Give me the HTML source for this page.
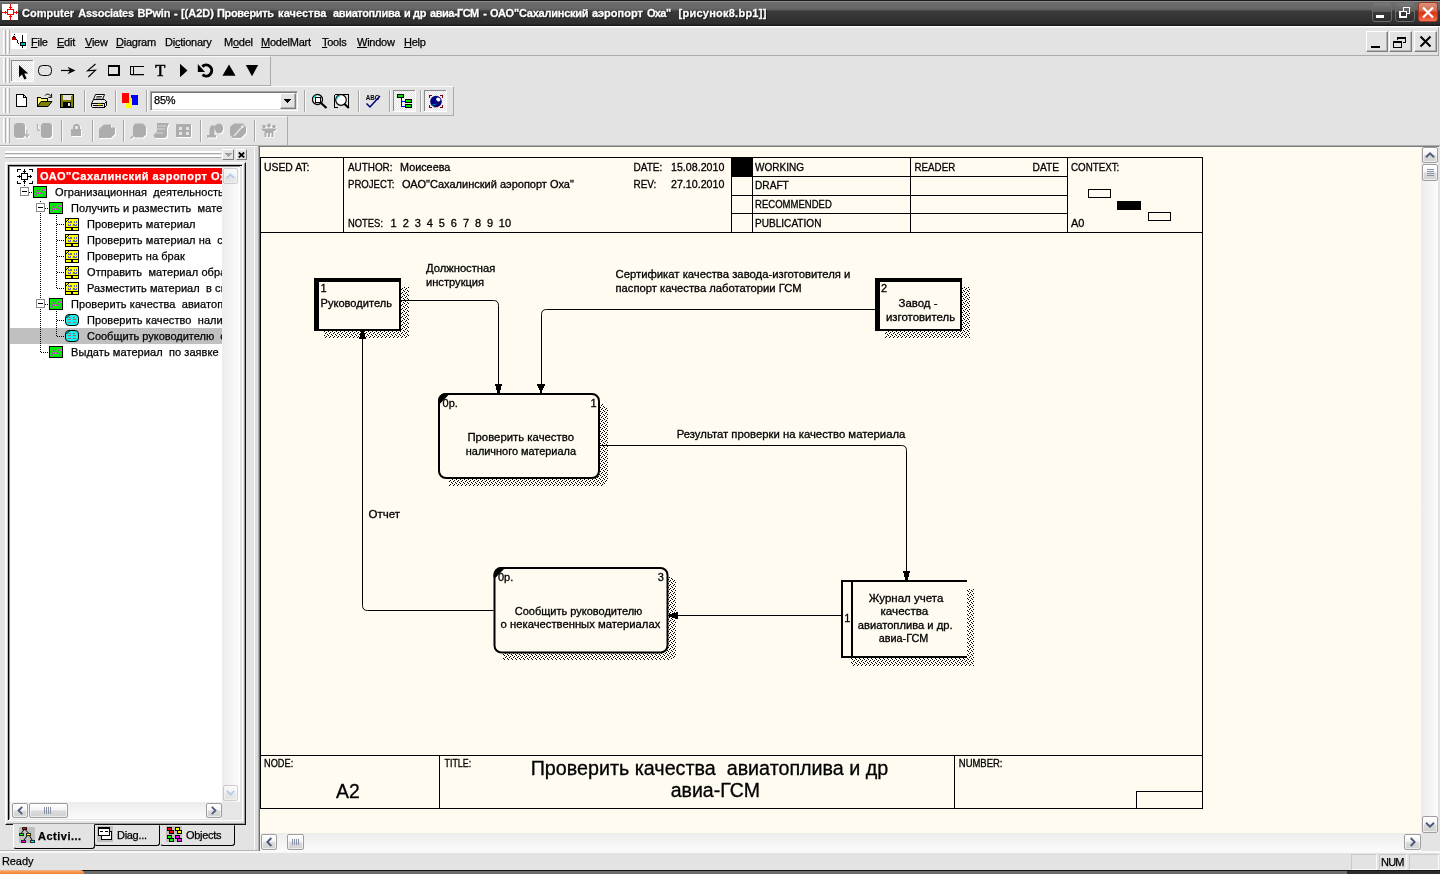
<!DOCTYPE html>
<html lang="ru">
<head>
<meta charset="utf-8">
<title>Computer Associates BPwin</title>
<style>
*{box-sizing:border-box;margin:0;padding:0}
html,body{width:1440px;height:874px;overflow:hidden;background:#e3e3e3}
body{will-change:transform;-webkit-text-stroke:.25px;position:relative;font-family:"Liberation Sans",sans-serif;font-size:11px;color:#000;line-height:1}
.abs{position:absolute}
/* ---------- title bar ---------- */
#titlebar{position:absolute;left:0;top:0;width:1440px;height:26px;
 background:linear-gradient(#1a1a1a 0,#1a1a1a 1px,#8c8c8c 1px,#8c8c8c 2px,#6d6d6d 2px,#656565 9px,#5a5a5a 10px,#3b3b3b 11px,#2d2d2d 24px,#191919 25px,#191919 26px)}
#titletext{position:absolute;left:22px;top:8px;font-weight:bold;font-size:11px;color:#fff;white-space:pre;letter-spacing:-0.04px;text-shadow:0 0 1px #000,1px 1px 0 #1a1a1a;-webkit-text-stroke:0.3px #fff}
.tbtn{position:absolute;top:2px;width:20px;height:20px;border-radius:3px;border:1px solid #6b6b6b;
 background:linear-gradient(#7a7a7a 0,#5c5c5c 48%,#3a3a3a 52%,#2e2e2e 100%)}
.tbtn.close{border-color:#a8371f;background:linear-gradient(#d8907e 0,#d9694f 45%,#dc3412 50%,#e8502e 80%,#f47a5c 100%)}
/* ---------- menu bar ---------- */
#menubar{position:absolute;left:0;top:26px;width:1440px;height:31px;background:#e3e3e3;border-top:1px solid #fdfdfd;box-shadow:inset 0 1px 0 #f0f0f0}
#menubar .band{position:absolute;left:0;top:0;width:1439px;height:29px;border-bottom:1px solid #ababab;border-right:1px solid #ababab}
.mi{position:absolute;top:10px;font-size:11px;white-space:pre;letter-spacing:-0.25px}
.mi u{text-decoration:underline;text-underline-offset:1px}
.grip{position:absolute;width:3px;border-left:1px solid #fff;border-right:1px solid #b0b0b0;background:#ececec}
.mdibtn{position:absolute;top:31px;width:22px;height:21px;background:#e3e3e3;border:1px solid;border-color:#fff #7e7e7e #7e7e7e #fff;box-shadow:inset -1px -1px 0 #b4b4b4}
/* ---------- toolbars ---------- */
.toolbar{position:absolute;left:0;height:30px;background:#e3e3e3;border-top:1px solid #fafafa;border-bottom:1px solid #aaa;border-right:1px solid #aaa}
.sep{position:absolute;width:2px;border-left:1px solid #a6a6a6;border-right:1px solid #fafafa}
.dither{background-color:#f1f1f1}

/* ---------- left panel ---------- */
#leftpanel{position:absolute;left:0;top:146px;width:258px;height:705px;background:#e3e3e3;border-top:1px solid #fbfbfb}
.hgrip{position:absolute;left:5px;width:216px;height:3px;background:#fff;border-bottom:1px solid #a8a8a8}
.sbtn{position:absolute;background:#e3e3e3;border:1px solid;border-color:#fff #7e7e7e #7e7e7e #fff}
#tabctl{position:absolute;left:5px;top:162px;width:241px;height:663px;border:1px solid;border-color:#fff #111 #111 #fff;box-shadow:inset -1px -1px 0 #9a9a9a,inset 1px 1px 0 #f4f4f4;background:#e3e3e3}
#treewin{position:absolute;left:7px;top:164px;width:236px;height:657px;border:1px solid;border-color:#c4c4c4 #fff #fff #c4c4c4;background:#e3e3e3;box-shadow:inset 1px 1px 0 #000}
#treein{position:absolute;left:1px;top:1px;width:231px;height:653px;border-left:1px solid #8e8e8e;border-top:1px solid #8e8e8e;background:#fff;overflow:hidden}
.trow{position:absolute;left:0;width:212px;height:16px;white-space:pre;overflow:hidden;font-size:11px}
.trow span{position:absolute;top:3px;letter-spacing:.07px}
.xsb{position:absolute;background:linear-gradient(90deg,#ececec,#fbfbfb)}
.xbtn{position:absolute;border:1px solid #9d9d9d;border-radius:2px;background:linear-gradient(#fff 0,#f4f4f4 45%,#dadada 55%,#d2d2d2 100%);box-shadow:inset 0 0 0 1px rgba(255,255,255,.6)}
.tab{position:absolute;background:#e3e3e3;border:1px solid;border-color:transparent #000 #000 #fff;border-radius:0 0 3px 3px}

/* ---------- MDI ---------- */
#mdi{background:#fffbf0}
#diagram text{font-family:"Liberation Sans",sans-serif;fill:#000;stroke:#000;stroke-width:.3px}
/* ---------- status ---------- */
#status{position:absolute;left:0;top:851px;width:1440px;height:19px;background:#e3e3e3}
#status .hl{position:absolute;left:0;top:0;width:1440px;height:2px;background:#f8f8f8}
.spanel{position:absolute;top:3px;height:16px;border:1px solid;border-color:#c9c9c9 #fbfbfb #fbfbfb #c9c9c9}
#taskstrip{position:absolute;left:0;top:870px;width:1440px;height:4px;background:linear-gradient(#0c0c0c 0,#1c1c1c 1px,#6a6a6a 1px,#6e6e6e 4px)}
#titletext span{position:absolute;top:0}
</style>
</head>
<body>

<!-- ================= TITLE BAR ================= -->
<div id="titlebar">
  <svg class="abs" style="left:2px;top:4px" width="16" height="16" viewBox="0 0 16 16" shape-rendering="crispEdges">
    <rect width="16" height="16" fill="#fff"/>
    <rect x="5.500" y="5.500" width="6" height="5" fill="none" stroke="#f00"/>
    <path d="M8.500 0V5M8.500 11V16M0 8.500H5M12 8.500H16" stroke="#f00" fill="none"/>
    <path d="M7 3.500h3M7 12.500h3M3.500 7v3M14.500 7v3" stroke="#f00" fill="none"/>
  </svg>
  <div id="titletext"><span id="tw0" style="left:0px;letter-spacing:0.02px">Computer</span> <span id="tw1" style="left:56.25px;letter-spacing:-0.25px">Associates</span> <span id="tw2" style="left:115.5px;letter-spacing:-0.18px">BPwin</span> <span id="tw3" style="left:151.9px;letter-spacing:-0.12px">-</span> <span id="tw4" style="left:159px;letter-spacing:-0.04px">[(A2D)</span> <span id="tw5" style="left:194.9px;letter-spacing:-0.31px">Проверить</span> <span id="tw6" style="left:256.1px;letter-spacing:0.06px">качества</span> <span id="tw7" style="left:311.1px;letter-spacing:-0.37px">авиатоплива</span> <span id="tw8" style="left:382px;letter-spacing:-0.60px">и</span> <span id="tw9" style="left:391.1px;letter-spacing:-0.36px">др</span> <span id="tw10" style="left:408px;letter-spacing:-0.46px">авиа-ГСМ</span> <span id="tw11" style="left:461.2px;letter-spacing:-0.22px">-</span> <span id="tw12" style="left:468px;letter-spacing:-0.23px">ОАО"Сахалинский</span> <span id="tw13" style="left:569.9px;letter-spacing:-0.00px">аэропорт</span> <span id="tw14" style="left:624.9px;letter-spacing:-0.60px">Оха"</span> <span id="tw15" style="left:656.5px;letter-spacing:0.25px">[рисунок8.bp1]]</span></div>
  <div class="tbtn" style="left:1372px"><div class="abs" style="left:3px;top:12px;width:8px;height:3px;background:#fff"></div></div>
  <div class="tbtn" style="left:1395px">
    <svg class="abs" style="left:0;top:0" width="18" height="18" viewBox="0 0 18 18" shape-rendering="crispEdges"><path d="M7.5 7.5v-3h6v6h-3" fill="none" stroke="#fff" stroke-width="1"/><rect x="3.750" y="8.250" width="6.500" height="5.500" fill="none" stroke="#fff" stroke-width="1.500"/></svg>
  </div>
  <div class="tbtn close" style="left:1418px">
    <svg class="abs" style="left:0;top:0" width="18" height="18" viewBox="0 0 18 18"><path d="M4 4.5l10 10M14 4.5l-10 10" stroke="#fff" stroke-width="2.2" fill="none"/></svg>
  </div>
</div>

<!-- ================= MENU BAR ================= -->
<div id="menubar">
  <div class="band"></div>
  <div class="grip" style="left:3px;top:3px;height:24px"></div>
  <div class="grip" style="left:7px;top:3px;height:24px"></div>
  <svg class="abs" style="left:11px;top:6px" width="16" height="16" viewBox="0 0 16 16" shape-rendering="crispEdges">
    <rect width="16" height="16" fill="#fff"/>
    <rect x="1" y="4" width="4" height="3" fill="#c00000"/><rect x="2" y="3" width="2" height="1" fill="#000"/><rect x="3" y="1" width="1" height="1" fill="#000"/>
    <path d="M5 6.5h1M6 7.5h1M6.5 8v2M7 10.5h1" stroke="#000" fill="none"/>
    <path d="M11.500 2v13" stroke="#000" fill="none"/>
    <rect x="9" y="9" width="5" height="3" fill="#00c0c0" stroke="#000" stroke-width="1"/>
  </svg>
  <span class="mi" id="m1" style="left:31px"><u>F</u>ile</span>
  <span class="mi" id="m2" style="left:57px"><u>E</u>dit</span>
  <span class="mi" id="m3" style="left:85px"><u>V</u>iew</span>
  <span class="mi" id="m4" style="left:116px"><u>D</u>iagram</span>
  <span class="mi" id="m5" style="left:165px">Di<u>c</u>tionary</span>
  <span class="mi" id="m6" style="left:224px">M<u>o</u>del</span>
  <span class="mi" id="m7" style="left:261px"><u>M</u>odelMart</span>
  <span class="mi" id="m8" style="left:322px"><u>T</u>ools</span>
  <span class="mi" id="m9" style="left:357px"><u>W</u>indow</span>
  <span class="mi" id="m10" style="left:404px"><u>H</u>elp</span>
</div>
<div class="mdibtn" style="left:1366px"><div class="abs" style="left:4px;top:14px;width:9px;height:2px;background:#000"></div></div>
<div class="mdibtn" style="left:1389px;width:23px">
  <svg class="abs" style="left:0;top:0" width="20" height="19" viewBox="0 0 20 19" shape-rendering="crispEdges"><path d="M7.500 8v-2.500h8v5h-3" fill="none" stroke="#000"/><path d="M7 6h9" stroke="#000" stroke-width="2"/><rect x="3.500" y="9.500" width="8" height="6" fill="none" stroke="#000"/><path d="M3 10h9" stroke="#000" stroke-width="2"/></svg>
</div>
<div class="mdibtn" style="left:1414px;width:23px">
  <svg class="abs" style="left:0;top:0" width="20" height="19" viewBox="0 0 20 19"><path d="M5.500 4.500l10 10M15.500 4.500l-10 10" stroke="#000" stroke-width="2" fill="none"/></svg>
</div>

<!-- ================= TOOLBARS ================= -->
<div class="toolbar" id="tb1" style="top:56px;width:271px">
  <div class="grip" style="left:3px;top:1px;height:25px"></div>
  <div class="grip" style="left:7px;top:1px;height:25px"></div>
  <svg class="abs" style="left:0;top:0" width="270" height="28" viewBox="0 57 270 28">
    <defs>
      <pattern id="dith" width="2" height="2" patternUnits="userSpaceOnUse"><rect width="2" height="2" fill="#fff"/><rect width="1" height="1" fill="#e3e3e3"/><rect x="1" y="1" width="1" height="1" fill="#e3e3e3"/></pattern>
    </defs>
    <g shape-rendering="crispEdges">
      <rect x="11" y="60" width="23" height="22" fill="url(#dith)"/>
      <path d="M11.500 82V60.500H34" stroke="#8a8a8a" fill="none"/>
      <path d="M11 81.500H33.500V60" stroke="#fff" fill="none"/>
    </g>
    <path d="M19 65V77.300L22 74.400L24.300 79.600L26.600 78.600L24.300 73.500H28.300Z" fill="#000"/>
    <rect x="38.500" y="65.500" width="13" height="10" rx="4" ry="4" fill="none" stroke="#000"/>
    <path d="M61 70.500H72" stroke="#000" stroke-width="1.200" fill="none"/>
    <path d="M75.500 70.500L67.500 66.800L70 70.500L67.500 74.200Z" fill="#000"/>
    <path d="M95.500 64L87.500 70.800L95.500 70.200L88.300 77" stroke="#000" stroke-width="1.100" fill="none"/>
    <g shape-rendering="crispEdges">
      <rect x="109" y="66" width="11" height="10" fill="#a8a8a8"/>
      <rect x="108" y="65" width="11" height="10" fill="#e3e3e3" stroke="none"/>
      <path d="M108 66H119.500" stroke="#000" stroke-width="2"/>
      <path d="M108.500 65V75.500M119 65V75.500M108 75H119.500" stroke="#000" stroke-width="1.400" fill="none"/>
      <path d="M144 66.500H130.500V74.500H144M133.500 66V75" stroke="#000" fill="none"/>
      <path d="M131 75.500H144" stroke="#a8a8a8" fill="none"/>
    </g>
    <text x="160.200" y="76" font-family="'Liberation Serif',serif" font-size="16.500" text-anchor="middle" fill="#000" stroke="#000" stroke-width=".6">T</text>
    <path d="M180 63.800L187.500 70.500L180 77.300Z" fill="#000"/>
    <path d="M202.300 66.600A5.500 5.500 0 1 1 202.600 74.700" stroke="#000" stroke-width="3" fill="none"/>
    <path d="M197.800 63.900V71.900H205Z" fill="#000"/>
    <path d="M229 64.400L235.600 75.800H222.400Z" fill="#000"/>
    <path d="M245.800 65H258.200L252 76.200Z" fill="#000"/>
  </svg>
</div>
<div class="toolbar" id="tb2" style="top:86px;width:454px">
  <div class="grip" style="left:3px;top:1px;height:25px"></div>
  <div class="grip" style="left:7px;top:1px;height:25px"></div>
  <div class="sep" style="left:84px;top:3px;height:22px"></div>
  <div class="sep" style="left:115px;top:3px;height:22px"></div>
  <div class="sep" style="left:146px;top:3px;height:22px"></div>
  <div class="sep" style="left:304px;top:3px;height:22px"></div>
  <div class="sep" style="left:358px;top:3px;height:22px"></div>
  <div class="sep" style="left:389px;top:3px;height:22px"></div>
  <div class="sep" style="left:420px;top:3px;height:22px"></div>
  <!-- zoom combo -->
  <div class="abs" style="left:150px;top:4px;width:148px;height:20px;background:#fff;border:1px solid;border-color:#a2a2a2 #fff #fff #a2a2a2;box-shadow:inset 1px 1px 0 #787878,inset -1px -1px 0 #dcdcdc">
    <span class="abs" style="left:3px;top:3px;font-size:11px;letter-spacing:-0.2px">85%</span>
    <div class="abs" style="right:1px;top:1px;width:16px;height:16px;background:#e3e3e3;border:1px solid;border-color:#fff #7e7e7e #7e7e7e #fff;box-shadow:inset -1px -1px 0 #b4b4b4">
      <svg class="abs" style="left:3px;top:5px" width="7" height="4" viewBox="0 0 7 4" shape-rendering="crispEdges"><path d="M0 0h7v1h-7zM1 1h5v1h-5zM2 2h3v1h-3zM3 3h1v1h-1z" fill="#000"/></svg>
    </div>
  </div>
  <svg class="abs" style="left:0;top:0" width="453" height="28" viewBox="0 87 453 28">
    <!-- new -->
    <g shape-rendering="crispEdges">
      <path d="M16.500 94.500H23.500L26.500 97.500V106.500H16.500Z" fill="#fff" stroke="#000"/>
      <path d="M23.500 94.500V97.500H26.500" fill="none" stroke="#000"/>
    </g>
    <!-- open -->
    <path d="M37.500 106.500V97.500H40.500L41.500 98.500H47.500V101" fill="#ffff80" stroke="#000" shape-rendering="crispEdges"/>
    <path d="M37.500 106.500L41 101.500H52L48 106.500Z" fill="#808000" stroke="#000" stroke-width="1"/>
    <path d="M45 95.500C46.500 93.600 49.500 93.600 51 96.500" fill="none" stroke="#000"/>
    <path d="M51.600 93.800V97.400H48.300" fill="none" stroke="#000"/>
    <!-- save -->
    <g shape-rendering="crispEdges">
      <rect x="60.500" y="94.500" width="13" height="13" fill="#808000" stroke="#000"/>
      <rect x="63" y="95" width="8" height="5" fill="#e3e3e3"/>
      <rect x="63" y="102" width="8" height="5" fill="#000"/>
      <rect x="68" y="103" width="2" height="3" fill="#e3e3e3"/>
      <rect x="71" y="95" width="1" height="1" fill="#e3e3e3"/>
    </g>
    <!-- printer -->
    <path d="M95.500 94.500H104.500L102.500 99.500H93.500Z" fill="#fff" stroke="#000"/>
    <path d="M96.500 96.500H102M95.800 98H101.500" stroke="#000" stroke-width=".8"/>
    <path d="M91.500 103.500L93.500 99.500H104.500L106.500 101.500V105.500L104.500 107.500H92.500L91.500 106.500Z" fill="#e8e8e8" stroke="#000"/>
    <path d="M91.500 103.500H104.500L106.500 101.500M104.500 103.500V107.500" fill="none" stroke="#000"/>
    <path d="M93 105.500H103" stroke="#000"/>
    <rect x="98" y="103.800" width="3" height="1.400" fill="#ff0"/>
    <!-- colors -->
    <g shape-rendering="crispEdges">
      <rect x="131" y="95" width="7" height="10" fill="#0000ff"/>
      <rect x="125" y="98" width="7" height="10" fill="#ffff00"/>
      <rect x="122" y="93" width="7" height="10" fill="#ff0000"/>
    </g>
    <!-- magnifier 1 -->
    <circle cx="317.500" cy="99.500" r="5" fill="#fff" stroke="#000" stroke-width="1.300"/>
    <path d="M313.800 98.200A4 4 0 0 1 316.500 95.700" stroke="#00e0e0" fill="none" stroke-width="1.200"/>
    <rect x="315.500" y="97.500" width="4.500" height="4.500" fill="none" stroke="#000" shape-rendering="crispEdges"/>
    <path d="M321.300 103.300L326.500 108" stroke="#000" stroke-width="2.200"/>
    <!-- magnifier 2 -->
    <path d="M334.500 94.500H348.500V107.500M334.500 94.500V107.500H338" stroke="#000" fill="none" shape-rendering="crispEdges"/>
    <circle cx="341" cy="100" r="5.300" fill="#fff" stroke="#000" stroke-width="1.200"/>
    <path d="M336.800 99A4.300 4.300 0 0 1 339.800 95.800" stroke="#00e0e0" fill="none" stroke-width="1.200"/>
    <path d="M344.500 104L348.800 108" stroke="#000" stroke-width="2.200"/>
    <!-- ABC check -->
    <text x="365.800" y="100" font-family="'Liberation Sans',sans-serif" font-size="8" font-weight="bold" fill="#000" textLength="13.500" lengthAdjust="spacingAndGlyphs">ABC</text>
    <path d="M366.500 103.500L370 107L380 96" stroke="#000080" stroke-width="1.500" fill="none"/>
    <!-- pressed buttons -->
    <g shape-rendering="crispEdges">
      <rect x="393" y="90" width="23" height="22" fill="url(#dith)"/>
      <path d="M393.500 112V90.500H416" stroke="#8a8a8a" fill="none"/>
      <path d="M393 111.500H415.500V90" stroke="#fff" fill="none"/>
      <rect x="424" y="90" width="23" height="22" fill="url(#dith)"/>
      <path d="M424.500 112V90.500H447" stroke="#8a8a8a" fill="none"/>
      <path d="M424 111.500H446.500V90" stroke="#fff" fill="none"/>
      <!-- tree icon -->
      <path d="M401.500 98V106.500H406M401.500 101.500H406" stroke="#0000ff" fill="none"/>
      <rect x="397.500" y="94.500" width="6" height="3" fill="#00e000" stroke="#000"/>
      <rect x="405.500" y="99.500" width="6" height="3" fill="#00e000" stroke="#000"/>
      <rect x="405.500" y="104.500" width="6" height="3" fill="#00e000" stroke="#000"/>
      <!-- globe frame -->
      <path d="M429.500 98V95.500H432M440 95.500H442.500V98M429.500 105V107.500H432M440 107.500H442.500V105" stroke="#800000" fill="none"/>
    </g>
    <circle cx="436" cy="101.500" r="5.800" fill="#000080"/>
    <ellipse cx="438.300" cy="99.500" rx="2.300" ry="1.800" fill="#fff" transform="rotate(35 438.300 99.500)"/>
    <path d="M431.500 105.500C433 104.500 435 105 436.500 103.800" stroke="#00a0a0" fill="none"/>
    <path d="M433 104L438 108M439 103L434 108" stroke="#800000" stroke-width=".7" stroke-dasharray="1 1" fill="none"/>
  </svg>
</div>
<div class="toolbar" id="tb3" style="top:116px;width:288px">
  <div class="grip" style="left:3px;top:1px;height:25px"></div>
  <div class="grip" style="left:7px;top:1px;height:25px"></div>
  <div class="sep" style="left:61px;top:3px;height:22px"></div>
  <div class="sep" style="left:92px;top:3px;height:22px"></div>
  <div class="sep" style="left:123px;top:3px;height:22px"></div>
  <div class="sep" style="left:200px;top:3px;height:22px"></div>
  <div class="sep" style="left:254px;top:3px;height:22px"></div>
  <svg class="abs" style="left:0;top:0" width="287" height="28" viewBox="0 117 287 28">
    <style>.hl path,.hl ellipse,.hl circle{fill:#fff;stroke:#fff}.hl .st{fill:none}.dk path,.dk ellipse,.dk circle{fill:#adadad;stroke:#adadad}.dk .st{fill:none}</style>
    <g class="hl" transform="translate(1 1)" stroke-width="0">
      <path d="M16 123H23L25 125V136L23 138H16L14 136V125Z"/>
      <path d="M27 130V136M25.200 134L27 137.300L29.200 134" fill="none" stroke-width="1.100" class="st"/>
      <path d="M43 123H50L52 125V136L50 138H43L41 136V125Z"/>
      <path d="M37.500 124V128.500Q37.500 130.800 40.500 131" fill="none" stroke-width="1.200" class="st"/>
      <path d="M71 129H81V136H71Z"/>
      <path d="M73 129V126L75 124H78L80 126V129Z"/>
      <path d="M99 129L104 124.500H111V127.500H115V134L111 138H99Z"/>
      <path d="M135 123.500H143L146 126.500V134.500L143 137.500H135L133 134.500V126.500Z"/>
      <path d="M134.500 135L130.500 138.500" fill="none" stroke-width="1.600" class="st"/>
      <path d="M157 123H169L167 128V136L165 138H155L153.500 135.500L157 131Z"/>
      <path d="M176 124H191V137H176Z"/>
      <path d="M207 137.500H216V135H214.500V129L216 125.500H211L209.500 129V135H207Z"/>
      <ellipse cx="219" cy="128.500" rx="4.200" ry="5"/>
      <path d="M234 123.500H243L246 127V133L241 138H233L230 135V127Z"/>
      <circle cx="264" cy="126.500" r="1.800"/><circle cx="269" cy="125.500" r="2"/><circle cx="274" cy="126.500" r="1.800"/>
      <path d="M261 128.500H277L275 131H273.500V137H271.500V133H270V137H268V133H266.500V137H264.500V131H263Z"/>
    </g>
    <g class="dk" stroke-width="0">
      <path d="M16 123H23L25 125V136L23 138H16L14 136V125Z"/>
      <path d="M27 130V136M25.200 134L27 137.300L29.200 134" fill="none" stroke-width="1.100" class="st"/>
      <path d="M43 123H50L52 125V136L50 138H43L41 136V125Z"/>
      <path d="M37.500 124V128.500Q37.500 130.800 40.500 131" fill="none" stroke-width="1.200" class="st"/>
      <path d="M71 129H81V136H71Z"/>
      <path d="M73 129V126L75 124H78L80 126V129Z"/>
      <path d="M99 129L104 124.500H111V127.500H115V134L111 138H99Z"/>
      <path d="M135 123.500H143L146 126.500V134.500L143 137.500H135L133 134.500V126.500Z"/>
      <path d="M134.500 135L130.500 138.500" fill="none" stroke-width="1.600" class="st"/>
      <path d="M157 123H169L167 128V136L165 138H155L153.500 135.500L157 131Z"/>
      <path d="M176 124H191V137H176Z"/>
      <path d="M207 137.500H216V135H214.500V129L216 125.500H211L209.500 129V135H207Z"/>
      <ellipse cx="219" cy="128.500" rx="4.200" ry="5"/>
      <path d="M234 123.500H243L246 127V133L241 138H233L230 135V127Z"/>
      <circle cx="264" cy="126.500" r="1.800"/><circle cx="269" cy="125.500" r="2"/><circle cx="274" cy="126.500" r="1.800"/>
      <path d="M261 128.500H277L275 131H273.500V137H271.500V133H270V137H268V133H266.500V137H264.500V131H263Z"/>
    </g>
    <g fill="#e3e3e3" shape-rendering="crispEdges">
      <rect x="179" y="127" width="3" height="3"/><rect x="186" y="127" width="3" height="3"/><rect x="179" y="132" width="3" height="3"/><rect x="186" y="132" width="3" height="3"/>
      <rect x="75" y="126" width="3" height="3"/>
    </g>
    <path d="M234 136L242 127" stroke="#e3e3e3" stroke-width="1.500"/><circle cx="242.500" cy="126.500" r="1.500" fill="#e3e3e3"/>
    <path d="M158 126H166M157 129H165M156 133H163" stroke="#e3e3e3" stroke-width=".8"/>
  </svg>
</div>

<!-- ================= LEFT PANEL ================= -->
<div id="leftpanel">
  <div class="hgrip" style="top:4px"></div>
  <div class="hgrip" style="top:8px"></div>
  <div class="sbtn" style="left:222px;top:2px;width:12px;height:11px"><svg class="abs" style="left:2px;top:3px" width="7" height="4" viewBox="0 0 7 4" shape-rendering="crispEdges"><path d="M0 0h7v1h-7zM1 1h5v1h-5zM2 2h3v1h-3zM3 3h1v1h-1z" fill="#a0a0a0"/></svg></div>
  <div class="sbtn" style="left:236px;top:2px;width:11px;height:11px"><svg class="abs" style="left:1px;top:2px" width="7" height="6" viewBox="0 0 7 6"><path d="M.8.5l5.400 5M6.200.5l-5.400 5" stroke="#000" stroke-width="1.800"/></svg></div>
</div>
<div id="tabctl"></div>
<div id="treewin"><div id="treein">
  <div class="abs" id="treecontent" style="left:0;top:0;width:212px;height:635px;overflow:hidden">
        <div class="trow" style="top:1px;left:27px;width:185px;background:#ff0000;color:#fff;font-weight:bold"><span id="troot" style="left:3px;letter-spacing:0.48px">ОАО"Сахалинский аэропорт Оха"</span></div>
    <div class="trow" style="top:17px;"><span id="t1" style="left:45px">Огранизационная  деятельность  ОАО</span></div>
    <div class="trow" style="top:33px;"><span id="t2" style="left:61px">Получить и разместить  материал</span></div>
    <div class="trow" style="top:49px;"><span id="t3" style="left:77px">Проверить материал</span></div>
    <div class="trow" style="top:65px;"><span id="t4" style="left:77px">Проверить материал на  соответствие</span></div>
    <div class="trow" style="top:81px;"><span id="t5" style="left:77px">Проверить на брак</span></div>
    <div class="trow" style="top:97px;"><span id="t6" style="left:77px">Отправить  материал обратно</span></div>
    <div class="trow" style="top:113px;"><span id="t7" style="left:77px">Разместить материал  в складе</span></div>
    <div class="trow" style="top:129px;"><span id="t8" style="left:61px">Проверить качества  авиатоплива и др</span></div>
    <div class="trow" style="top:145px;"><span id="t9" style="left:77px">Проверить качество  наличного материала</span></div>
    <div class="trow" style="top:161px; background:#c0c0c0;"><span id="t10" style="left:77px;letter-spacing:-0.02px">Сообщить руководителю  о некачественных</span></div>
    <div class="trow" style="top:177px;"><span id="t11" style="left:61px">Выдать материал  по заявке</span></div>
    <svg class="abs" style="left:0;top:0" width="213" height="200" viewBox="0 0 213 200" shape-rendering="crispEdges">
      <path d="M14 18h1v1h-1zM19 25h1v1h-1zM21 25h1v1h-1zM30 34h1v1h-1zM35 41h1v1h-1zM37 41h1v1h-1zM30 46h1v1h-1zM30 48h1v1h-1zM30 50h1v1h-1zM30 52h1v1h-1zM30 54h1v1h-1zM30 56h1v1h-1zM30 58h1v1h-1zM30 60h1v1h-1zM30 62h1v1h-1zM30 64h1v1h-1zM30 66h1v1h-1zM30 68h1v1h-1zM30 70h1v1h-1zM30 72h1v1h-1zM30 74h1v1h-1zM30 76h1v1h-1zM30 78h1v1h-1zM30 80h1v1h-1zM30 82h1v1h-1zM30 84h1v1h-1zM30 86h1v1h-1zM30 88h1v1h-1zM30 90h1v1h-1zM30 92h1v1h-1zM30 94h1v1h-1zM30 96h1v1h-1zM30 98h1v1h-1zM30 100h1v1h-1zM30 102h1v1h-1zM30 104h1v1h-1zM30 106h1v1h-1zM30 108h1v1h-1zM30 110h1v1h-1zM30 112h1v1h-1zM30 114h1v1h-1zM30 116h1v1h-1zM30 118h1v1h-1zM30 120h1v1h-1zM30 122h1v1h-1zM30 124h1v1h-1zM30 126h1v1h-1zM30 128h1v1h-1zM30 130h1v1h-1zM30 142h1v1h-1zM30 144h1v1h-1zM30 146h1v1h-1zM30 148h1v1h-1zM30 150h1v1h-1zM30 152h1v1h-1zM30 154h1v1h-1zM30 156h1v1h-1zM30 158h1v1h-1zM30 160h1v1h-1zM30 162h1v1h-1zM30 164h1v1h-1zM30 166h1v1h-1zM30 168h1v1h-1zM30 170h1v1h-1zM30 172h1v1h-1zM30 174h1v1h-1zM30 176h1v1h-1zM30 178h1v1h-1zM30 180h1v1h-1zM30 182h1v1h-1zM30 184h1v1h-1zM31 185h1v1h-1zM33 185h1v1h-1zM35 185h1v1h-1zM37 185h1v1h-1zM35 137h1v1h-1zM37 137h1v1h-1zM46 48h1v1h-1zM46 50h1v1h-1zM46 52h1v1h-1zM46 54h1v1h-1zM46 56h1v1h-1zM46 58h1v1h-1zM46 60h1v1h-1zM46 62h1v1h-1zM46 64h1v1h-1zM46 66h1v1h-1zM46 68h1v1h-1zM46 70h1v1h-1zM46 72h1v1h-1zM46 74h1v1h-1zM46 76h1v1h-1zM46 78h1v1h-1zM46 80h1v1h-1zM46 82h1v1h-1zM46 84h1v1h-1zM46 86h1v1h-1zM46 88h1v1h-1zM46 90h1v1h-1zM46 92h1v1h-1zM46 94h1v1h-1zM46 96h1v1h-1zM46 98h1v1h-1zM46 100h1v1h-1zM46 102h1v1h-1zM46 104h1v1h-1zM46 106h1v1h-1zM46 108h1v1h-1zM46 110h1v1h-1zM46 112h1v1h-1zM46 114h1v1h-1zM46 116h1v1h-1zM46 118h1v1h-1zM46 120h1v1h-1zM47 57h1v1h-1zM49 57h1v1h-1zM51 57h1v1h-1zM53 57h1v1h-1zM47 73h1v1h-1zM49 73h1v1h-1zM51 73h1v1h-1zM53 73h1v1h-1zM47 89h1v1h-1zM49 89h1v1h-1zM51 89h1v1h-1zM53 89h1v1h-1zM47 105h1v1h-1zM49 105h1v1h-1zM51 105h1v1h-1zM53 105h1v1h-1zM47 121h1v1h-1zM49 121h1v1h-1zM51 121h1v1h-1zM53 121h1v1h-1zM46 144h1v1h-1zM46 146h1v1h-1zM46 148h1v1h-1zM46 150h1v1h-1zM46 152h1v1h-1zM46 154h1v1h-1zM46 156h1v1h-1zM46 158h1v1h-1zM46 160h1v1h-1zM46 162h1v1h-1zM46 164h1v1h-1zM46 166h1v1h-1zM46 168h1v1h-1zM47 153h1v1h-1zM49 153h1v1h-1zM51 153h1v1h-1zM53 153h1v1h-1zM47 169h1v1h-1zM49 169h1v1h-1zM51 169h1v1h-1zM53 169h1v1h-1z" fill="#000"/>
      <g transform="translate(7 2)" stroke="#000" fill="none"><path d="M.500 3V.500H4M12 .500H15.500V3M.500 12V14.500H4M12 14.500H15.500V12"/><rect x="4.500" y="4.500" width="6" height="6" fill="#fff"/><path d="M7.500 0V4M0 7.500H4M11 7.500H15M7.500 11V15"/><path d="M6 2.500h3M2.500 6v3M13.500 6v3M6 12.500h3"/></g>
            <g transform="translate(23 19)"><rect x=".5" y=".5" width="13" height="11" fill="#00f000" stroke="#000"/><path d="M3 4.500h4M9 4.500h1M11 4.500h1M4 3.500h1M6 3.500h1M9 3.500h1M11 3.500h1M3 6.500h1M5 6.500h1M3 7.500h3M7 7.500h4M7 6.500h2M10 6.500h1M1 9.500h3M10 9.500h3" stroke="#a060a0" fill="none"/></g>
      <g transform="translate(10 20)"><rect x=".5" y=".5" width="8" height="8" fill="#fff" stroke="#8c8c8c"/><path d="M2 4.500h5" stroke="#000"/></g>
      <g transform="translate(39 35)"><rect x=".5" y=".5" width="13" height="11" fill="#00f000" stroke="#000"/><path d="M3 4.500h4M9 4.500h1M11 4.500h1M4 3.500h1M6 3.500h1M9 3.500h1M11 3.500h1M3 6.500h1M5 6.500h1M3 7.500h3M7 7.500h4M7 6.500h2M10 6.500h1M1 9.500h3M10 9.500h3" stroke="#a060a0" fill="none"/></g>
      <g transform="translate(26 36)"><rect x=".5" y=".5" width="8" height="8" fill="#fff" stroke="#8c8c8c"/><path d="M2 4.500h5" stroke="#000"/></g>
      <g transform="translate(55 51)"><rect x=".5" y=".5" width="13" height="12" fill="#ffff00" stroke="#000"/><path d="M0 9.500h14" stroke="#000" fill="none"/><path d="M7 9v4" stroke="#000" stroke-width="2"/><path d="M3 4.500h4M9 4.500h1M11 4.500h1M3 3.500h1M5 3.500h2M9 3.500h1M11 3.500h1M3 6.500h1M5 6.500h1M3 7.500h3M8 7.500h4M8 6.500h2M11 6.500h1" stroke="#6868b0" fill="none"/><path d="M1 3h1v1h-1zM2 2h1v1h-1zM3 1h1v1h-1z" fill="#000"/></g>
      <g transform="translate(55 67)"><rect x=".5" y=".5" width="13" height="12" fill="#ffff00" stroke="#000"/><path d="M0 9.500h14" stroke="#000" fill="none"/><path d="M7 9v4" stroke="#000" stroke-width="2"/><path d="M3 4.500h4M9 4.500h1M11 4.500h1M3 3.500h1M5 3.500h2M9 3.500h1M11 3.500h1M3 6.500h1M5 6.500h1M3 7.500h3M8 7.500h4M8 6.500h2M11 6.500h1" stroke="#6868b0" fill="none"/><path d="M1 3h1v1h-1zM2 2h1v1h-1zM3 1h1v1h-1z" fill="#000"/></g>
      <g transform="translate(55 83)"><rect x=".5" y=".5" width="13" height="12" fill="#ffff00" stroke="#000"/><path d="M0 9.500h14" stroke="#000" fill="none"/><path d="M7 9v4" stroke="#000" stroke-width="2"/><path d="M3 4.500h4M9 4.500h1M11 4.500h1M3 3.500h1M5 3.500h2M9 3.500h1M11 3.500h1M3 6.500h1M5 6.500h1M3 7.500h3M8 7.500h4M8 6.500h2M11 6.500h1" stroke="#6868b0" fill="none"/><path d="M1 3h1v1h-1zM2 2h1v1h-1zM3 1h1v1h-1z" fill="#000"/></g>
      <g transform="translate(55 99)"><rect x=".5" y=".5" width="13" height="12" fill="#ffff00" stroke="#000"/><path d="M0 9.500h14" stroke="#000" fill="none"/><path d="M7 9v4" stroke="#000" stroke-width="2"/><path d="M3 4.500h4M9 4.500h1M11 4.500h1M3 3.500h1M5 3.500h2M9 3.500h1M11 3.500h1M3 6.500h1M5 6.500h1M3 7.500h3M8 7.500h4M8 6.500h2M11 6.500h1" stroke="#6868b0" fill="none"/><path d="M1 3h1v1h-1zM2 2h1v1h-1zM3 1h1v1h-1z" fill="#000"/></g>
      <g transform="translate(55 115)"><rect x=".5" y=".5" width="13" height="12" fill="#ffff00" stroke="#000"/><path d="M0 9.500h14" stroke="#000" fill="none"/><path d="M7 9v4" stroke="#000" stroke-width="2"/><path d="M3 4.500h4M9 4.500h1M11 4.500h1M3 3.500h1M5 3.500h2M9 3.500h1M11 3.500h1M3 6.500h1M5 6.500h1M3 7.500h3M8 7.500h4M8 6.500h2M11 6.500h1" stroke="#6868b0" fill="none"/><path d="M1 3h1v1h-1zM2 2h1v1h-1zM3 1h1v1h-1z" fill="#000"/></g>
      <g transform="translate(39 131)"><rect x=".5" y=".5" width="13" height="11" fill="#00f000" stroke="#000"/><path d="M3 4.500h4M9 4.500h1M11 4.500h1M4 3.500h1M6 3.500h1M9 3.500h1M11 3.500h1M3 6.500h1M5 6.500h1M3 7.500h3M7 7.500h4M7 6.500h2M10 6.500h1M1 9.500h3M10 9.500h3" stroke="#a060a0" fill="none"/></g>
      <g transform="translate(26 132)"><rect x=".5" y=".5" width="8" height="8" fill="#fff" stroke="#8c8c8c"/><path d="M2 4.500h5" stroke="#000"/></g>
      <g transform="translate(55 147)" shape-rendering="auto"><rect x=".5" y=".5" width="13" height="11" rx="3.500" fill="#18f0f0" stroke="#000"/><path d="M1.500 4l3-3" stroke="#000"/><path d="M3 5.500h3M8 5.500h3M3 8.500h3M8 8.500h3M4 3.500h2M8 3.500h2" stroke="#a06868" fill="none" shape-rendering="crispEdges"/></g>
      <g transform="translate(55 163)" shape-rendering="auto"><rect x=".5" y=".5" width="13" height="11" rx="3.500" fill="#18f0f0" stroke="#000"/><path d="M1.500 4l3-3" stroke="#000"/><path d="M3 5.500h3M8 5.500h3M3 8.500h3M8 8.500h3M4 3.500h2M8 3.500h2" stroke="#a06868" fill="none" shape-rendering="crispEdges"/></g>
      <g transform="translate(39 179)"><rect x=".5" y=".5" width="13" height="11" fill="#00f000" stroke="#000"/><path d="M3 4.500h4M9 4.500h1M11 4.500h1M4 3.500h1M6 3.500h1M9 3.500h1M11 3.500h1M3 6.500h1M5 6.500h1M3 7.500h3M7 7.500h4M7 6.500h2M10 6.500h1M1 9.500h3M10 9.500h3" stroke="#a060a0" fill="none"/></g>
    </svg>
  </div>
  <!-- tree vertical scrollbar -->
  <div class="xsb" style="left:212px;top:0;width:17px;height:635px"></div>
  <div class="xbtn" style="left:213px;top:1px;width:15px;height:16px;opacity:.45"><svg class="abs" style="left:2px;top:4px" width="9" height="6" viewBox="0 0 9 6"><path d="M.8 5.200L4.500 1.500L8.200 5.200" stroke="#6a9ae0" stroke-width="1.800" fill="none"/></svg></div>
  <div class="xbtn" style="left:213px;top:618px;width:15px;height:16px;opacity:.45"><svg class="abs" style="left:2px;top:4px" width="9" height="6" viewBox="0 0 9 6"><path d="M.8 .800L4.500 4.500L8.200 .800" stroke="#6a9ae0" stroke-width="1.800" fill="none"/></svg></div>
  <!-- tree horizontal scrollbar -->
  <div class="xsb" style="left:0;top:635px;width:212px;height:17px;background:linear-gradient(#ececec,#fbfbfb)"></div>
  <div class="xbtn" style="left:2px;top:636px;width:16px;height:15px"><svg class="abs" style="left:4px;top:2px" width="6" height="9" viewBox="0 0 6 9"><path d="M5.200 .800L1.500 4.500L5.200 8.200" stroke="#4d5a78" stroke-width="1.800" fill="none"/></svg></div>
  <div class="xbtn" style="left:19px;top:636px;width:39px;height:15px"><svg class="abs" style="left:14px;top:3px" width="8" height="7" viewBox="0 0 8 7" shape-rendering="crispEdges"><path d="M.500 0V7M2.500 0V7M4.500 0V7M6.500 0V7" stroke="#8a93a8"/></svg></div>
  <div class="xbtn" style="left:196px;top:636px;width:16px;height:15px"><svg class="abs" style="left:4px;top:2px" width="6" height="9" viewBox="0 0 6 9"><path d="M.8 .800L4.500 4.500L.8 8.200" stroke="#4d5a78" stroke-width="1.800" fill="none"/></svg></div>
  <div class="abs" style="left:212px;top:635px;width:18px;height:17px;background:#e6e6e6"></div>
</div></div>
<!-- bottom tabs -->
<div class="tab" style="left:94px;top:825px;width:66px;height:21px;border-left-color:transparent">
  <svg class="abs" style="left:2px;top:0px" width="16" height="16" viewBox="0 0 16 16" shape-rendering="crispEdges"><rect width="16" height="16" fill="#c0c0c0"/><rect x="4.500" y="5.500" width="10" height="8" fill="#fff" stroke="#000"/><rect x="1.500" y="1.500" width="11" height="8" fill="#fff" stroke="#000"/><path d="M1 2h12" stroke="#000" stroke-width="2"/><path d="M3 5.500h3M8 5.500h3" stroke="#000"/></svg>
  <span class="abs" id="tabdiag" style="left:22px;top:4px;letter-spacing:-0.3px">Diag...</span>
</div>
<div class="tab" style="left:160px;top:825px;width:75px;height:21px;border-left-color:transparent">
  <svg class="abs" style="left:5px;top:0px" width="16" height="16" viewBox="0 0 16 16" shape-rendering="crispEdges"><rect width="16" height="11" fill="#c0c0c0"/><rect x="0" y="5" width="16" height="11" fill="#c0c0c0"/>
    <rect x="1.500" y="1.500" width="4" height="3" fill="#f00" stroke="#000"/><rect x="3.500" y="4.500" width="4" height="3" fill="#f00" stroke="#000"/>
    <rect x="9.500" y="1.500" width="4" height="3" fill="#ff0" stroke="#000"/><rect x="11.500" y="4.500" width="4" height="3" fill="#ff0" stroke="#000"/>
    <rect x="1.500" y="9.500" width="4" height="3" fill="#0f0" stroke="#000"/><rect x="3.500" y="12.500" width="4" height="3" fill="#0f0" stroke="#000"/>
    <rect x="9.500" y="9.500" width="4" height="3" fill="#f0f" stroke="#000"/><rect x="11.500" y="12.500" width="4" height="3" fill="#f0f" stroke="#000"/></svg>
  <span class="abs" id="tabobj" style="left:25px;top:4px;letter-spacing:-0.3px">Objects</span>
</div>
<div class="tab" style="left:13px;top:824px;width:82px;height:25px">
  <svg class="abs" style="left:5px;top:2px" width="16" height="16" viewBox="0 0 16 16"><rect width="16" height="16" fill="#c0c0c0"/><path d="M5.500 2L2.500 6M5.500 2L9.500 6M9.500 7L5 13M9.500 7L13 13" stroke="#000" fill="none"/><g shape-rendering="crispEdges"><rect x="3.500" y=".5" width="4" height="2" fill="#f00" stroke="#000" stroke-width=".8"/><rect x=".5" y="6.500" width="4" height="2" fill="#0f0" stroke="#000" stroke-width=".8"/><rect x="7.500" y="6.500" width="4" height="2" fill="#ff0" stroke="#000" stroke-width=".8"/><rect x="2.500" y="13.500" width="4" height="2" fill="#f0f" stroke="#000" stroke-width=".8"/><rect x="11.500" y="13.500" width="4" height="2" fill="#0ff" stroke="#000" stroke-width=".8"/></g></svg>
  <span class="abs" id="tabact" style="left:24px;top:6px;font-weight:bold;letter-spacing:0.5px">Activi...</span>
</div>

<!-- ================= MDI / DIAGRAM ================= -->
<div class="abs" style="left:0;top:145px;width:1440px;height:1px;background:#adadad"></div>
<div class="abs" style="left:254px;top:147px;width:1px;height:703px;background:#fbfbfb"></div>
<div class="abs" style="left:255px;top:147px;width:3px;height:703px;background:#dcdcdc"></div>
<div class="abs" style="left:258px;top:146px;width:1181px;height:1px;background:#7c7c7c"></div>
<div class="abs" style="left:258px;top:147px;width:1px;height:704px;background:#b0b0b0"></div>
<div class="abs" style="left:259px;top:147px;width:1px;height:704px;background:#6e6e6e"></div>
<div id="mdi" class="abs" style="left:260px;top:147px;width:1161px;height:686px">
<svg id="diagram" class="abs" style="left:0;top:0" width="1161" height="686" viewBox="260 147 1161 686">
  <defs>
    <pattern id="shd" x="0" y="0" width="4" height="4" patternUnits="userSpaceOnUse"><rect x="2" y="0" width="1" height="1" fill="#000"/><rect x="1" y="1" width="1" height="1" fill="#000"/><rect x="3" y="2" width="1" height="1" fill="#000"/><rect x="0" y="3" width="1" height="1" fill="#000"/></pattern>
  </defs>
  <g id="frame" shape-rendering="crispEdges" stroke="#000" fill="none">
    <rect x="260.500" y="157.500" width="942" height="651"/>
    <path d="M260 232.500H1203M260 755.500H1203"/>
    <path d="M343.500 157V233M731.500 157V233M752.500 157V233M910.500 157V233M1067.500 157V233"/>
    <path d="M731 176.500H1068M731 195.500H1068M731 213.500H1068"/>
    <rect x="731" y="157" width="22" height="20" fill="#000" stroke="none"/>
    <rect x="1088.500" y="189.500" width="22" height="8"/>
    <rect x="1117" y="201" width="24" height="9" fill="#000" stroke="none"/>
    <rect x="1148.500" y="212.500" width="22" height="8"/>
    <path d="M439.500 755V809M954.500 755V809M1136.500 809V791.500H1203"/>
  </g>
  <g id="shapes">
    <!-- shadows -->
    <g fill="url(#shd)" shape-rendering="crispEdges">
      <path d="M401 287H409V338H324V330H401Z"/>
      <path d="M962 287H970V338H885V331H962Z"/>
      <path d="M600 404Q608 404 608 412V478Q608 486 600 486H449V479H592Q600 479 600 471Z"/>
      <path d="M668 577Q676 577 676 585V652Q676 660 668 660H503V653H660Q668 653 668 645Z"/>
      <path d="M967 589H974V666H851V658H967Z"/>
    </g>
    <!-- external boxes -->
    <g shape-rendering="crispEdges">
      <rect x="314" y="278" width="87" height="53" fill="#000"/>
      <rect x="319" y="282" width="80" height="47" fill="#fffbf0"/>
      <rect x="875" y="278" width="87" height="53" fill="#000"/>
      <rect x="880" y="282" width="80" height="47" fill="#fffbf0"/>
    </g>
    <!-- activities -->
    <rect x="439" y="394" width="160" height="84" rx="7" ry="7" fill="#fffbf0" stroke="#000" stroke-width="2"/>
    <path d="M438 403V401A8 8 0 0 1 446 393H448.500V395L440 403.800Z" fill="#000"/>
    <rect x="494.500" y="568" width="173" height="84.500" rx="7" ry="7" fill="#fffbf0" stroke="#000" stroke-width="2"/>
    <path d="M493.500 577V575A8 8 0 0 1 501.500 567H504V569L495.500 577.800Z" fill="#000"/>
    <!-- data store -->
    <g shape-rendering="crispEdges" fill="none" stroke="#000" stroke-width="2">
      <path d="M967 581H842V657H967M852 581V657"/>
    </g>
    <!-- arrows -->
    <g fill="none" stroke="#000" stroke-width="1">
      <path d="M401 300.500H493.500Q498.500 300.500 498.500 305.500V386"/>
      <path d="M875 309.500H546.500Q541.500 309.500 541.500 314.500V386"/>
      <path d="M600 445.500H901.500Q906.500 445.500 906.500 450.500V573"/>
      <path d="M841 615.500H677"/>
      <path d="M493.500 610.500H367.500Q362.500 610.500 362.500 605.500V338"/>
    </g>
    <g fill="#000" shape-rendering="crispEdges">
      <path d="M495 384h7v2h-1v4h-1v3h-3v-3h-1v-4h-1z"/>
      <path d="M537 384h8v2h-1v2h-1v2h-1v3h-2v-3h-1v-2h-1v-2h-1z"/>
      <path d="M903 571h7v2h-1v4h-1v3h-3v-3h-1v-4h-1z"/>
      <path d="M678 612v7h-2v-1h-4v-1h-3v-3h3v-1h4v-1z"/>
      <path d="M359 339h7v-2h-1v-4h-1v-2h-3v2h-1v4h-1z"/>
    </g>
  </g>
  <g id="texts">
    <text x="264" y="171" font-size="11" id="x_used" textLength="45.4" lengthAdjust="spacingAndGlyphs" xml:space="preserve">USED AT:</text>
    <text x="348" y="171" font-size="11" id="x_author" textLength="44.5" lengthAdjust="spacingAndGlyphs" xml:space="preserve">AUTHOR:</text>
    <text x="400" y="171" font-size="11" id="x_mois" textLength="50.3" lengthAdjust="spacingAndGlyphs" xml:space="preserve">Моисеева</text>
    <text x="348" y="188" font-size="11" id="x_project" textLength="46.4" lengthAdjust="spacingAndGlyphs" xml:space="preserve">PROJECT:</text>
    <text x="402" y="188" font-size="11" id="x_oao" textLength="171.8" lengthAdjust="spacingAndGlyphs" xml:space="preserve">ОАО"Сахалинский аэропорт Оха"</text>
    <text x="348" y="227" font-size="11" id="x_notes" textLength="35" lengthAdjust="spacingAndGlyphs" xml:space="preserve">NOTES:</text>
    <text x="633.5" y="171" font-size="11" id="x_datel" textLength="28.8" lengthAdjust="spacingAndGlyphs" xml:space="preserve">DATE:</text>
    <text x="671" y="171" font-size="11" id="x_d1" textLength="53.4" lengthAdjust="spacingAndGlyphs" xml:space="preserve">15.08.2010</text>
    <text x="633.5" y="188" font-size="11" id="x_revl" textLength="22.8" lengthAdjust="spacingAndGlyphs" xml:space="preserve">REV:</text>
    <text x="671" y="188" font-size="11" id="x_d2" textLength="53.4" lengthAdjust="spacingAndGlyphs" xml:space="preserve">27.10.2010</text>
    <text x="755" y="171" font-size="11" id="x_working" textLength="49" lengthAdjust="spacingAndGlyphs" xml:space="preserve">WORKING</text>
    <text x="755" y="189" font-size="11" id="x_draft" textLength="33.8" lengthAdjust="spacingAndGlyphs" xml:space="preserve">DRAFT</text>
    <text x="755" y="208" font-size="11" id="x_recom" textLength="76.8" lengthAdjust="spacingAndGlyphs" xml:space="preserve">RECOMMENDED</text>
    <text x="755" y="227" font-size="11" id="x_publ" textLength="66.4" lengthAdjust="spacingAndGlyphs" xml:space="preserve">PUBLICATION</text>
    <text x="914.5" y="171" font-size="11" id="x_reader" textLength="40.7" lengthAdjust="spacingAndGlyphs" xml:space="preserve">READER</text>
    <text x="1032.5" y="171" font-size="11" id="x_date2" textLength="26.5" lengthAdjust="spacingAndGlyphs" xml:space="preserve">DATE</text>
    <text x="1071" y="171" font-size="11" id="x_context" textLength="48.3" lengthAdjust="spacingAndGlyphs" xml:space="preserve">CONTEXT:</text>
    <text x="1071" y="227" font-size="11" xml:space="preserve">A0</text>
    <text x="390.6" y="227" font-size="11" xml:space="preserve">1</text>
    <text x="402.65000000000003" y="227" font-size="11" xml:space="preserve">2</text>
    <text x="414.70000000000005" y="227" font-size="11" xml:space="preserve">3</text>
    <text x="426.75" y="227" font-size="11" xml:space="preserve">4</text>
    <text x="438.8" y="227" font-size="11" xml:space="preserve">5</text>
    <text x="450.85" y="227" font-size="11" xml:space="preserve">6</text>
    <text x="462.90000000000003" y="227" font-size="11" xml:space="preserve">7</text>
    <text x="474.95000000000005" y="227" font-size="11" xml:space="preserve">8</text>
    <text x="487.0" y="227" font-size="11" xml:space="preserve">9</text>
    <text x="498.8" y="227" font-size="11" xml:space="preserve">10</text>
    <text x="264" y="767" font-size="10" id="x_node" textLength="29.2" lengthAdjust="spacingAndGlyphs" xml:space="preserve">NODE:</text>
    <text x="444.5" y="767" font-size="10" id="x_title" textLength="26.7" lengthAdjust="spacingAndGlyphs" xml:space="preserve">TITLE:</text>
    <text x="958.8" y="767" font-size="10" id="x_number" textLength="43.7" lengthAdjust="spacingAndGlyphs" xml:space="preserve">NUMBER:</text>
    <text x="336" y="798" font-size="20" id="x_a2" textLength="23.7" lengthAdjust="spacingAndGlyphs" xml:space="preserve">A2</text>
    <text x="530.7" y="775" font-size="20" id="x_t1" textLength="357.6" lengthAdjust="spacingAndGlyphs" xml:space="preserve">Проверить качества  авиатоплива и др</text>
    <text x="670.7" y="797.3" font-size="20" id="x_t2" textLength="89.3" lengthAdjust="spacingAndGlyphs" xml:space="preserve">авиа-ГСМ</text>
    <text x="320.5" y="292.4" font-size="11" xml:space="preserve">1</text>
    <text x="320.5" y="307" font-size="11" id="x_ruk" textLength="71.5" lengthAdjust="spacingAndGlyphs" xml:space="preserve">Руководитель</text>
    <text x="426" y="272" font-size="11" id="x_dolzh" textLength="69.3" lengthAdjust="spacingAndGlyphs" xml:space="preserve">Должностная</text>
    <text x="426" y="285.6" font-size="11" id="x_instr" textLength="58.1" lengthAdjust="spacingAndGlyphs" xml:space="preserve">инструкция</text>
    <text x="615.5" y="278" font-size="11" id="x_sert" textLength="234.9" lengthAdjust="spacingAndGlyphs" xml:space="preserve">Сертификат качества завода-изготовителя и</text>
    <text x="615.5" y="291.6" font-size="11" id="x_pasp" textLength="186.1" lengthAdjust="spacingAndGlyphs" xml:space="preserve">паспорт качества лаботатории ГСМ</text>
    <text x="881" y="292.4" font-size="11" xml:space="preserve">2</text>
    <text x="898.5" y="307" font-size="11" id="x_zavod" textLength="39" lengthAdjust="spacingAndGlyphs" xml:space="preserve">Завод -</text>
    <text x="886" y="320.6" font-size="11" id="x_izg" textLength="69.1" lengthAdjust="spacingAndGlyphs" xml:space="preserve">изготовитель</text>
    <text x="442.6" y="406.7" font-size="11" xml:space="preserve">0р.</text>
    <text x="590.4" y="406.7" font-size="11" xml:space="preserve">1</text>
    <text x="467.4" y="441" font-size="11" id="x_pk" textLength="106.6" lengthAdjust="spacingAndGlyphs" xml:space="preserve">Проверить качество</text>
    <text x="465.8" y="454.6" font-size="11" id="x_nm" textLength="110.2" lengthAdjust="spacingAndGlyphs" xml:space="preserve">наличного материала</text>
    <text x="676.7" y="438" font-size="11" id="x_rez" textLength="228.7" lengthAdjust="spacingAndGlyphs" xml:space="preserve">Результат проверки на качество материала</text>
    <text x="368.5" y="518" font-size="11" id="x_otchet" textLength="31.5" lengthAdjust="spacingAndGlyphs" xml:space="preserve">Отчет</text>
    <text x="498" y="580.7" font-size="11" xml:space="preserve">0р.</text>
    <text x="657.8" y="580.7" font-size="11" xml:space="preserve">3</text>
    <text x="514.8" y="614.6" font-size="11" id="x_soob" textLength="127.5" lengthAdjust="spacingAndGlyphs" xml:space="preserve">Сообщить руководителю</text>
    <text x="500.6" y="628.4" font-size="11" id="x_nek" textLength="159.7" lengthAdjust="spacingAndGlyphs" xml:space="preserve">о некачественных материалах</text>
    <text x="844.3" y="622.3" font-size="11" xml:space="preserve">1</text>
    <text x="868.8" y="601.6" font-size="11" id="x_zh" textLength="74.5" lengthAdjust="spacingAndGlyphs" xml:space="preserve">Журнал учета</text>
    <text x="880.5" y="615.2" font-size="11" id="x_kach" textLength="47.8" lengthAdjust="spacingAndGlyphs" xml:space="preserve">качества</text>
    <text x="857.8" y="628.8" font-size="11" id="x_avia" textLength="94.7" lengthAdjust="spacingAndGlyphs" xml:space="preserve">авиатоплива и др.</text>
    <text x="878.7" y="642.4" font-size="11" id="x_gsm" textLength="49.6" lengthAdjust="spacingAndGlyphs" xml:space="preserve">авиа-ГСМ</text>
  </g>
</svg>
</div>
<!-- diagram vertical scrollbar -->
<div class="xsb" style="left:1421px;top:147px;width:17px;height:686px"></div>
<div class="xbtn" style="left:1422px;top:147px;width:16px;height:16px"><svg class="abs" style="left:2px;top:4px" width="10" height="6" viewBox="0 0 10 6"><path d="M1 5.300L5 1.400L9 5.300" stroke="#4d5a78" stroke-width="1.900" fill="none"/></svg></div>
<div class="xbtn" style="left:1422px;top:164px;width:16px;height:17px"><svg class="abs" style="left:4px;top:4px" width="7" height="8" viewBox="0 0 7 8" shape-rendering="crispEdges"><path d="M0 .500H7M0 2.500H7M0 4.500H7M0 6.500H7" stroke="#8a93a8"/></svg></div>
<div class="xbtn" style="left:1422px;top:816px;width:16px;height:17px"><svg class="abs" style="left:2px;top:5px" width="10" height="6" viewBox="0 0 10 6"><path d="M1 .700L5 4.600L9 .700" stroke="#4d5a78" stroke-width="1.900" fill="none"/></svg></div>
<!-- diagram horizontal scrollbar -->
<div class="xsb" style="left:260px;top:833px;width:1161px;height:18px;background:linear-gradient(#ececec,#fbfbfb)"></div>
<div class="xbtn" style="left:261px;top:834px;width:16px;height:16px"><svg class="abs" style="left:4px;top:2px" width="6" height="10" viewBox="0 0 6 10"><path d="M5.300 1L1.400 5L5.300 9" stroke="#4d5a78" stroke-width="1.900" fill="none"/></svg></div>
<div class="xbtn" style="left:287px;top:834px;width:17px;height:16px"><svg class="abs" style="left:4px;top:4px" width="8" height="6" viewBox="0 0 8 6" shape-rendering="crispEdges"><path d="M.500 0V6M2.500 0V6M4.500 0V6M6.500 0V6" stroke="#8a93a8"/></svg></div>
<div class="xbtn" style="left:1404px;top:834px;width:17px;height:16px"><svg class="abs" style="left:5px;top:2px" width="6" height="10" viewBox="0 0 6 10"><path d="M.700 1L4.600 5L.700 9" stroke="#4d5a78" stroke-width="1.900" fill="none"/></svg></div>
<div class="abs" style="left:1421px;top:833px;width:18px;height:18px;background:#e4e4e4"></div>

<!-- ================= STATUS BAR ================= -->
<div class="abs" style="left:0;top:850px;width:258px;height:1px;background:#b4b4b4"></div>
<div id="status">
  <div class="hl"></div>
  <span class="abs" id="ready" style="left:2px;top:5px;letter-spacing:-0.1px">Ready</span>
  <div class="spanel" style="left:1351px;width:26px"></div>
  <div class="spanel" style="left:1379px;width:28px"><span class="abs" style="left:1px;top:2px;letter-spacing:-0.8px">NUM</span></div>
  <div class="spanel" style="left:1409px;width:30px"></div>
</div>
<div id="taskstrip">
  <div class="abs" style="left:0;top:0;width:84px;height:4px;background:linear-gradient(#f9b27a,#f08030);border-radius:0 5px 0 0"></div>
  <div class="abs" style="left:1347px;top:1px;width:93px;height:3px;background:#2c2c2c"></div>
</div>

</body>
</html>
